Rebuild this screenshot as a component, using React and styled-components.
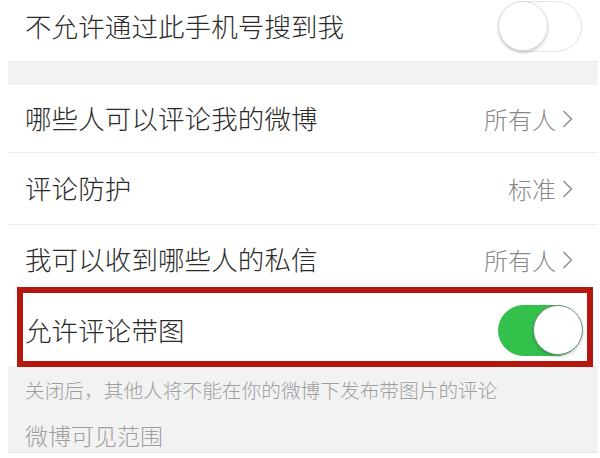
import React from 'react';
import styled, { createGlobalStyle } from 'styled-components';

const GlobalStyle = createGlobalStyle`
  html, body {
    margin: 0;
    padding: 0;
    background: #fff;
  }
  body {
    font-family: "Noto Sans CJK SC", "Noto Sans", sans-serif;
  }
`;

const Page = styled.div`
  width: 600px;
  height: 458px;
  overflow: hidden;
  background: #fff;
`;

const Panel = styled.div`
  margin: 0 2px 0 8px;
  display: flex;
  flex-direction: column;
`;

const Row = styled.div`
  position: relative;
  display: flex;
  align-items: center;
  justify-content: space-between;
  box-sizing: border-box;
  height: ${(p) => p.h}px;
  padding: ${(p) => p.pad || '0 16px 0 17px'};
  background: #fff;
  border-bottom: ${(p) => (p.line ? '1px solid #ececec' : 'none')};
`;

const Label = styled.span`
  font-size: 26.5px;
  font-weight: 300;
  color: #2a2a2a;
  letter-spacing: 0.1px;
  line-height: 1;
`;

const Value = styled.span`
  display: flex;
  align-items: center;
  gap: 5px;
  font-size: 24px;
  font-weight: 300;
  color: #888;
  line-height: 1;
  margin-right: 8px;
`;

const Gap = styled.div`
  height: 23px;
  background: #f2f2f2;
`;

const Track = styled.div`
  position: relative;
  box-sizing: border-box;
  width: 84px;
  height: 51px;
  border-radius: 26px;
  border: 1.5px solid ${(p) => (p.on ? '#33c04b' : '#e3e3e3')};
  background: ${(p) => (p.on ? '#33c04b' : '#fff')};
  flex-shrink: 0;
`;

const Knob = styled.div`
  position: absolute;
  top: -1px;
  ${(p) => (p.on ? 'right: -1.5px;' : 'left: -1.5px;')}
  width: 50px;
  height: 50px;
  box-sizing: border-box;
  border-radius: 50%;
  background: #fff;
  border: 1px solid ${(p) => (p.on ? '#6f8f74' : '#dcdcdc')};
  box-shadow: 0 2px 3px rgba(0, 0, 0, 0.18);
`;

const Highlight = styled.div`
  position: absolute;
  left: 9px;
  top: -7px;
  width: 576px;
  height: 80px;
  box-sizing: border-box;
  border: 6px solid #b3170d;
  pointer-events: none;
`;

const Footer = styled.div`
  display: flex;
  flex-direction: column;
  background: #f2f2f2;
  height: 86px;
  padding-left: 17px;
  border-bottom: 1px solid #e6e6e6;
`;

const Note = styled.div`
  font-size: ${(p) => p.size}px;
  font-weight: 300;
  color: #9e9e9e;
  line-height: 1;
  margin-top: ${(p) => p.mt}px;
`;

const Chevron = () => (
  <svg width="13" height="20" viewBox="0 0 13 20">
    <path d="M2.5 2 L10.5 10 L2.5 18" fill="none" stroke="#8f8f8f" strokeWidth="1.5" strokeLinejoin="round" />
  </svg>
);

const Switch = ({ on }) => (
  <Track on={on ? 1 : 0}>
    <Knob on={on ? 1 : 0} />
  </Track>
);

export default function App() {
  return (
    <Page>
      <GlobalStyle />
      <Panel>
        <Row h={62} pad="0 16px 8px 17px" line>
          <Label>不允许通过此手机号搜到我</Label>
          <Switch />
        </Row>
        <Gap />
        <Row h={68} line>
          <Label>哪些人可以评论我的微博</Label>
          <Value>所有人<Chevron /></Value>
        </Row>
        <Row h={72} line>
          <Label>评论防护</Label>
          <Value>标准<Chevron /></Value>
        </Row>
        <Row h={69}>
          <Label>我可以收到哪些人的私信</Label>
          <Value>所有人<Chevron /></Value>
        </Row>
        <Row h={72}>
          <Label>允许评论带图</Label>
          <Switch on />
          <Highlight />
        </Row>
        <Footer>
          <Note size={19.7} mt={14}>关闭后，其他人将不能在你的微博下发布带图片的评论</Note>
          <Note size={23} mt={24}>微博可见范围</Note>
        </Footer>
      </Panel>
    </Page>
  );
}
